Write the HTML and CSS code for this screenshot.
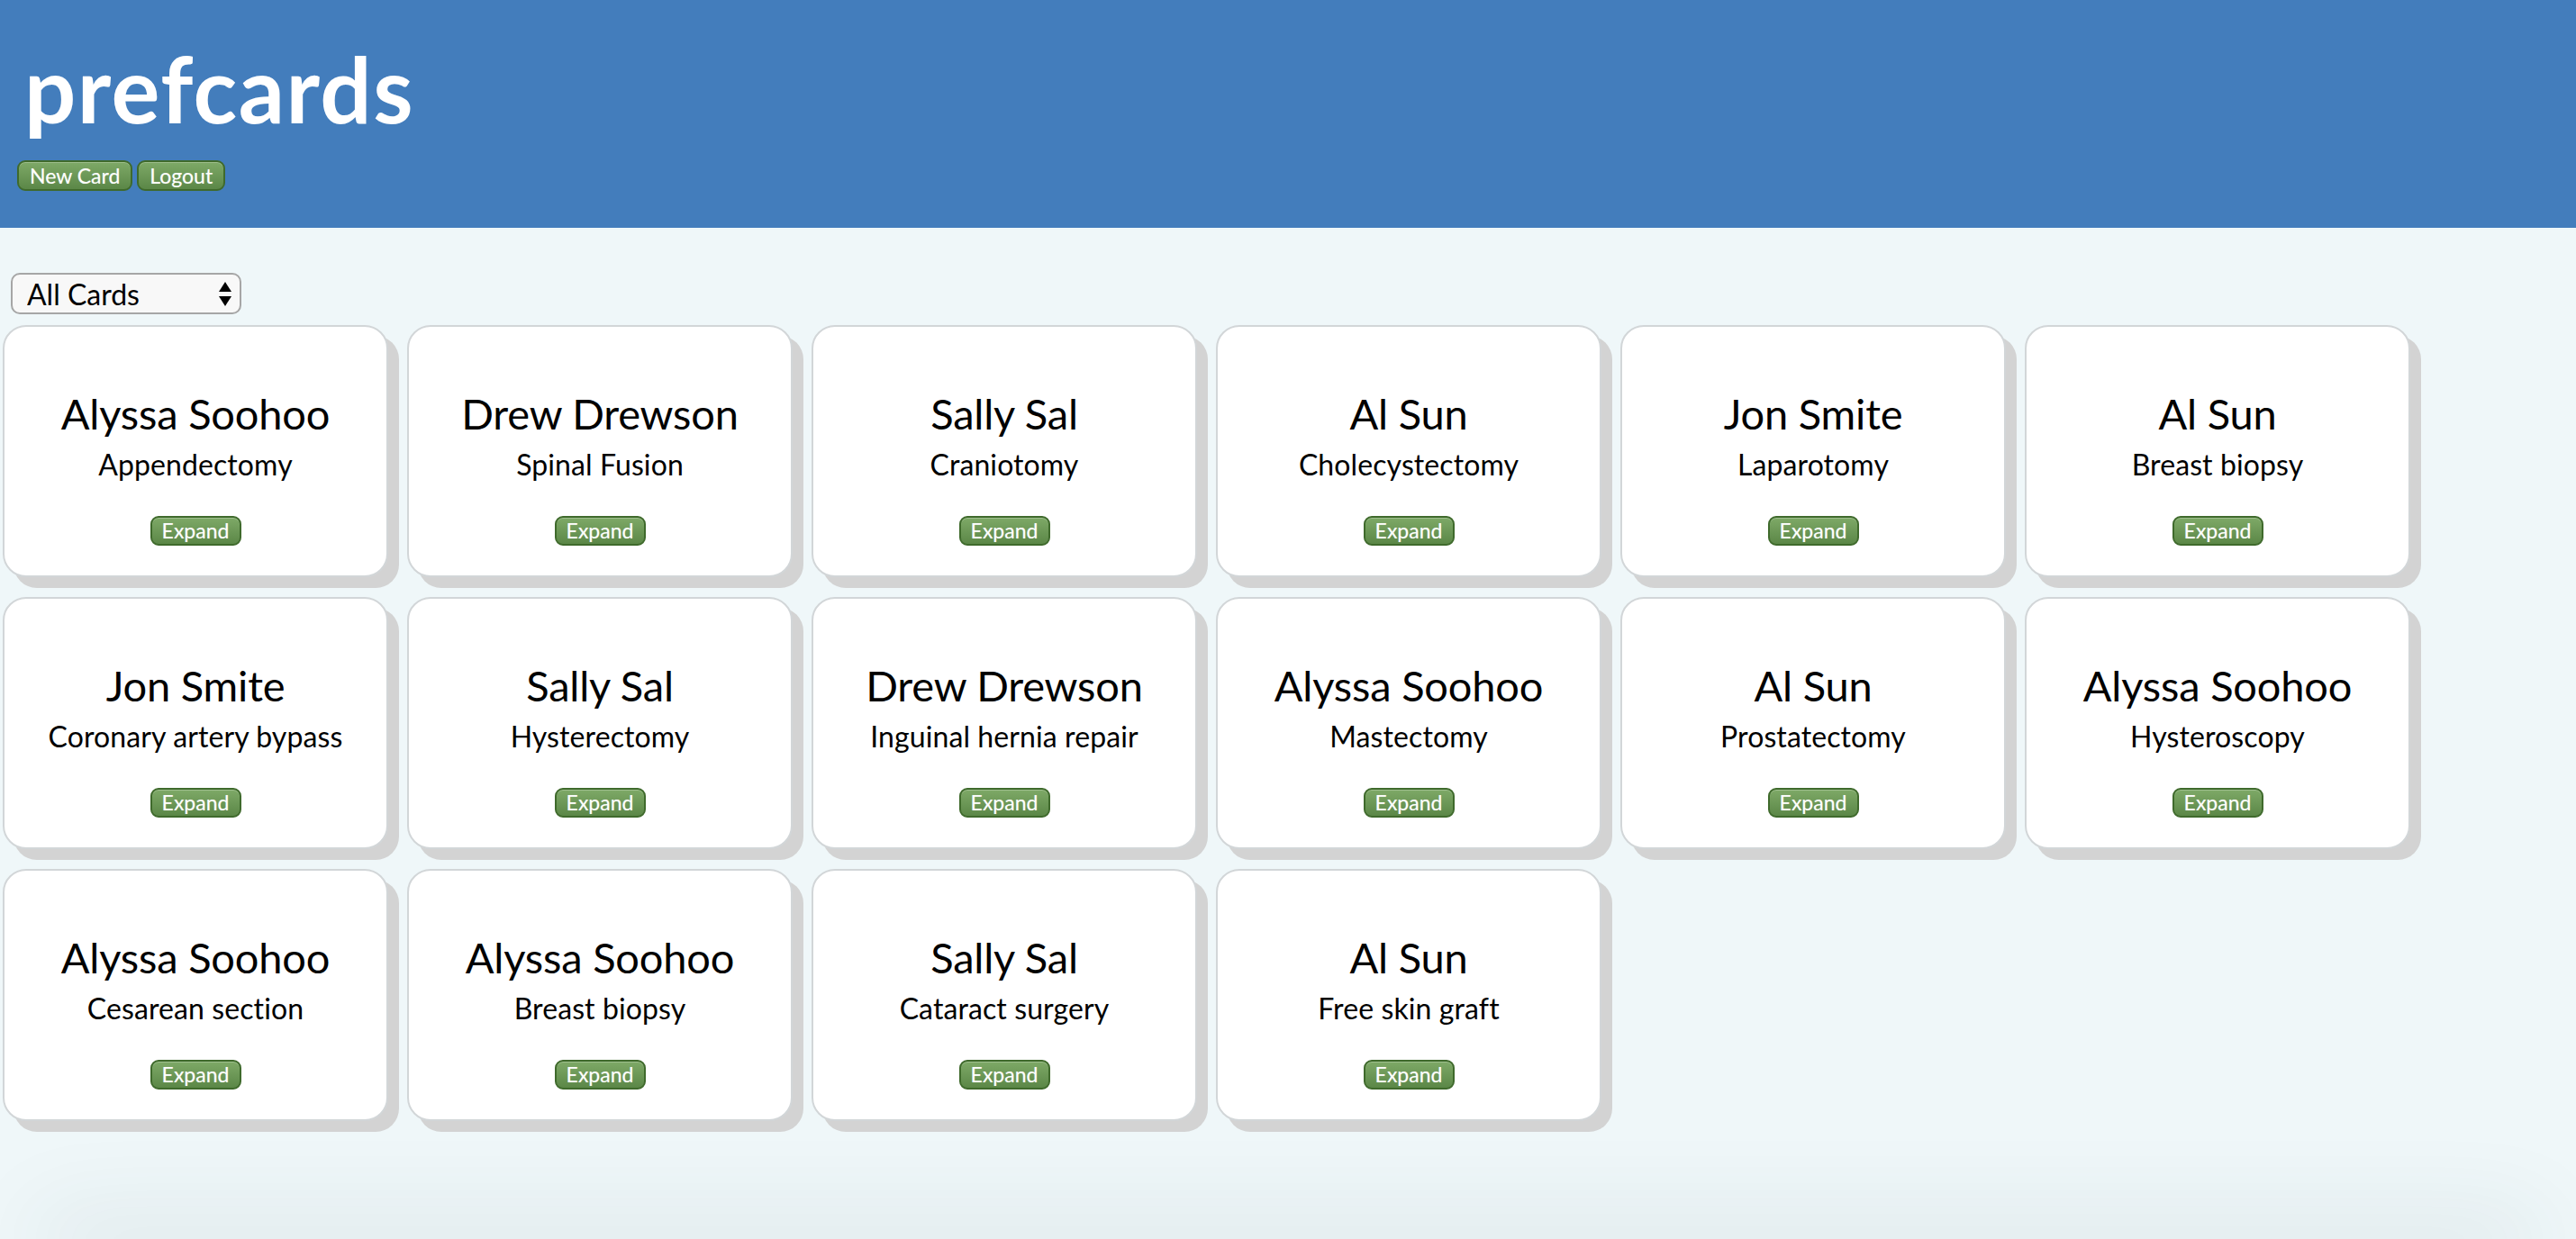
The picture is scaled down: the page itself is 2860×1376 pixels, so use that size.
FILE: index.html
```html
<!DOCTYPE html>
<html lang="en">
<head>
<meta charset="utf-8">
<title>prefcards</title>
<link rel="stylesheet" href="styles.css">
</head>
<body>
<header class="top">
  <h1 class="brand">prefcards</h1>
  <nav class="actions">
    <button class="gbtn hbtn">New Card</button>
    <button class="gbtn hbtn">Logout</button>
  </nav>
</header>
<main class="main">
  <div class="filter">
    <select class="filter-select">
      <option>All Cards</option>
    </select>
    <svg class="filter-arrows" width="16" height="30" viewBox="0 0 16 30" aria-hidden="true">
      <path d="M8 1 L15 12 L1 12 Z" fill="#000"/>
      <path d="M1 17 L15 17 L8 28 Z" fill="#000"/>
    </svg>
  </div>
  <section class="cards">
    <article class="card"><h2 class="name">Alyssa Soohoo</h2><p class="proc">Appendectomy</p><button class="gbtn ebtn">Expand</button></article>
    <article class="card"><h2 class="name">Drew Drewson</h2><p class="proc">Spinal Fusion</p><button class="gbtn ebtn">Expand</button></article>
    <article class="card"><h2 class="name">Sally Sal</h2><p class="proc">Craniotomy</p><button class="gbtn ebtn">Expand</button></article>
    <article class="card"><h2 class="name">Al Sun</h2><p class="proc">Cholecystectomy</p><button class="gbtn ebtn">Expand</button></article>
    <article class="card"><h2 class="name">Jon Smite</h2><p class="proc">Laparotomy</p><button class="gbtn ebtn">Expand</button></article>
    <article class="card"><h2 class="name">Al Sun</h2><p class="proc">Breast biopsy</p><button class="gbtn ebtn">Expand</button></article>
    <article class="card"><h2 class="name">Jon Smite</h2><p class="proc">Coronary artery bypass</p><button class="gbtn ebtn">Expand</button></article>
    <article class="card"><h2 class="name">Sally Sal</h2><p class="proc">Hysterectomy</p><button class="gbtn ebtn">Expand</button></article>
    <article class="card"><h2 class="name">Drew Drewson</h2><p class="proc">Inguinal hernia repair</p><button class="gbtn ebtn">Expand</button></article>
    <article class="card"><h2 class="name">Alyssa Soohoo</h2><p class="proc">Mastectomy</p><button class="gbtn ebtn">Expand</button></article>
    <article class="card"><h2 class="name">Al Sun</h2><p class="proc">Prostatectomy</p><button class="gbtn ebtn">Expand</button></article>
    <article class="card"><h2 class="name">Alyssa Soohoo</h2><p class="proc">Hysteroscopy</p><button class="gbtn ebtn">Expand</button></article>
    <article class="card"><h2 class="name">Alyssa Soohoo</h2><p class="proc">Cesarean section</p><button class="gbtn ebtn">Expand</button></article>
    <article class="card"><h2 class="name">Alyssa Soohoo</h2><p class="proc">Breast biopsy</p><button class="gbtn ebtn">Expand</button></article>
    <article class="card"><h2 class="name">Sally Sal</h2><p class="proc">Cataract surgery</p><button class="gbtn ebtn">Expand</button></article>
    <article class="card"><h2 class="name">Al Sun</h2><p class="proc">Free skin graft</p><button class="gbtn ebtn">Expand</button></article>
  </section>
  <footer class="foot"></footer>
</main>
</body>
</html>
```
FILE: styles.css
```css
* { box-sizing: border-box; }

html, body {
  margin: 0;
  padding: 0;
  background: #eff7f9;
  font-family: Lato, "Open Sans", "DejaVu Sans", sans-serif;
  color: #000;
  overflow: hidden;
}

.top {
  background: #437dbc;
  padding: 40px 19px 41px;
}

.brand {
  margin: 0 0 21px;
  padding-left: 8px;
  font-size: 101px;
  line-height: 117px;
  font-weight: 700;
  color: #fff;
  letter-spacing: 1.5px;
}

.actions {
  display: flex;
  gap: 5px;
}

.gbtn {
  font-family: Lato, "Open Sans", sans-serif;
  color: #fff;
  border: 2px solid #3f6a2c;
  border-radius: 9px;
  background: linear-gradient(#7ea967, #5b8747);
  box-shadow: inset 0 1px 0 rgba(255,255,255,0.25);
  font-size: 22px;
  padding: 0;
  cursor: pointer;
  text-shadow: 0 0 1px rgba(255,255,255,0.4);
}

.hbtn {
  height: 34px;
  padding: 0 12px;
  font-size: 23px;
}

.main {
  padding: 50px 0 0 3px;
}

.filter {
  position: relative;
  width: 256px;
  height: 46px;
  margin: 0 0 12px 9px;
}

.filter-select {
  appearance: none;
  -webkit-appearance: none;
  width: 100%;
  height: 100%;
  border: 2px solid #a6a6a6;
  border-radius: 10px;
  background: #f8f8f8;
  font-family: Lato, "Open Sans", sans-serif;
  font-size: 32px;
  color: #000;
  padding: 0 0 0 16px;
}

.filter-arrows {
  position: absolute;
  right: 10px;
  top: 9px;
  pointer-events: none;
}

.cards {
  display: flex;
  flex-wrap: wrap;
  column-gap: 21px;
  row-gap: 22px;
  width: 2700px;
}

.card {
  width: 428px;
  height: 280px;
  background: #fff;
  border: 2px solid #d2d6d8;
  border-radius: 26px;
  box-shadow: 12px 12px 0 #d3d3d3;
  display: flex;
  flex-direction: column;
  align-items: center;
  padding-top: 67px;
  text-align: center;
}

.name {
  margin: 0;
  font-size: 47px;
  line-height: 58px;
  font-weight: 400;
  letter-spacing: -0.2px;
}

.proc {
  margin: 8px 0 0;
  font-size: 32px;
  line-height: 40px;
  letter-spacing: 0.1px;
}

.ebtn {
  margin-top: 37px;
  width: 101px;
  height: 33px;
  line-height: 29px;
  font-size: 23px;
}

.foot {
  margin: 133px 60px 0;
  height: 0;
  box-shadow: 0 0 100px 20px rgba(40, 60, 70, 0.13);
}
```
